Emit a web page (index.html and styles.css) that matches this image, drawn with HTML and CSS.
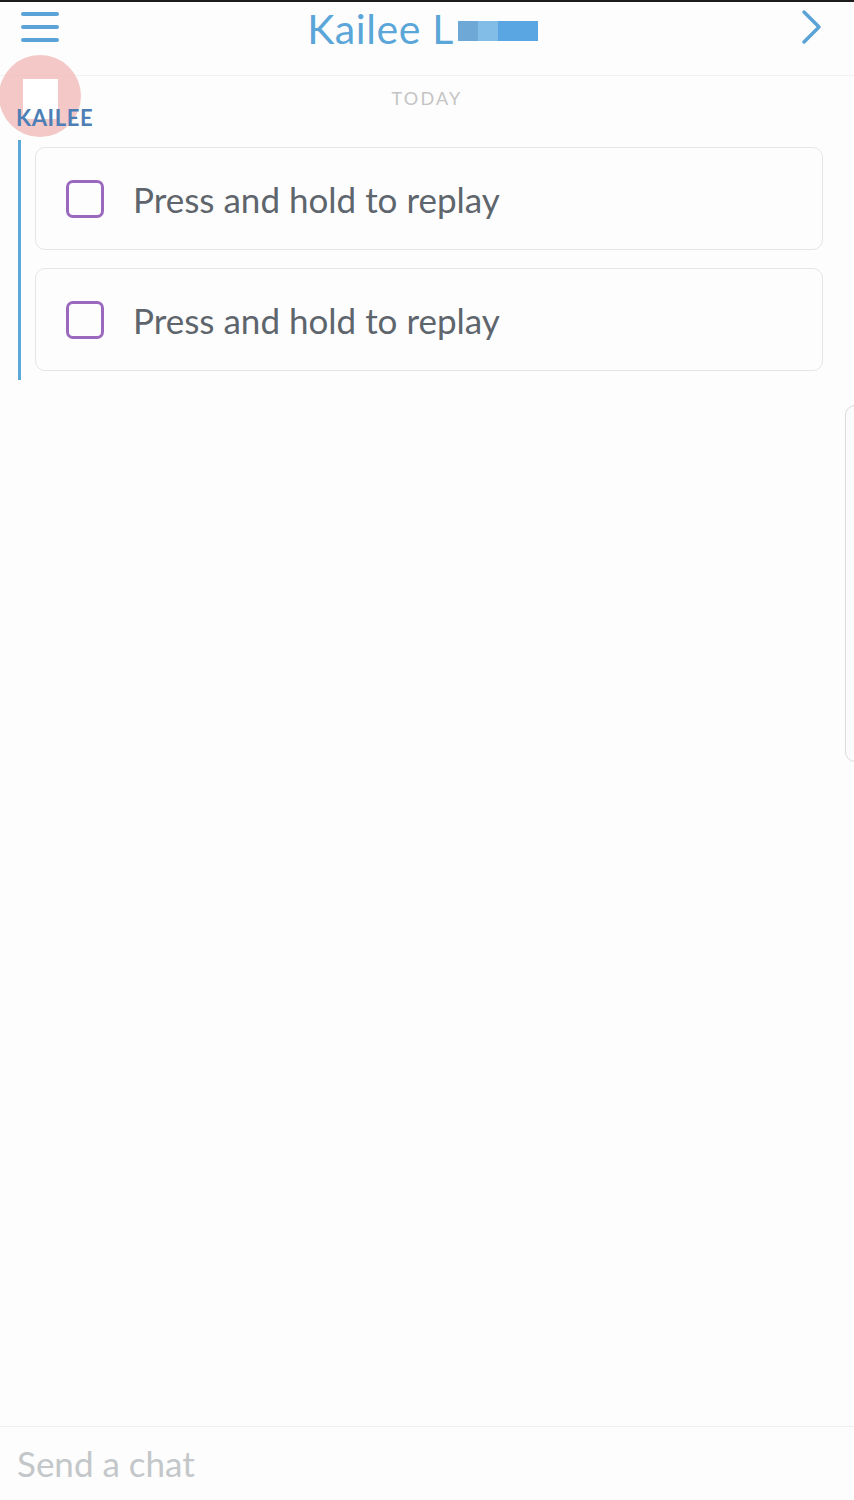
FILE: index.html
```html
<!DOCTYPE html>
<html lang="en">
<head>
  <meta charset="UTF-8">
  <title>Chat</title>
  <meta name="viewport" content="width=device-width, initial-scale=1">
  <link rel="stylesheet" href="styles.css">
</head>
<body>

<div class="pantalla">
  <header class="cabecera">
    <button class="icono menu" aria-label="Menu">
      <svg width="40" height="34" viewBox="0 0 40 34">
        <g stroke="#5ba3d6" stroke-width="4" stroke-linecap="round">
          <line x1="3" y1="4" x2="37" y2="4"/>
          <line x1="3" y1="17" x2="37" y2="17"/>
          <line x1="3" y1="30" x2="37" y2="30"/>
        </g>
      </svg>
    </button>

    <h1 class="titulo">Kailee L<span class="censura"><i class="c1"></i><i class="c2"></i><i class="c3"></i></span></h1>

    <button class="icono siguiente" aria-label="Next">
      <svg width="24" height="38" viewBox="0 0 24 38">
        <polyline points="4,4 19,19 4,34" fill="none" stroke="#5ba3d6" stroke-width="3.5" stroke-linecap="round" stroke-linejoin="round"/>
      </svg>
    </button>
  </header>

  <main class="conversacion">
    <div class="toque"><span></span></div>

    <p class="fecha">TODAY</p>
    <p class="remitente">KAILEE</p>

    <div class="mensajes">
      <div class="snap">
        <span class="casilla"></span>
        <span class="texto">Press and hold to replay</span>
      </div>
      <div class="snap">
        <span class="casilla"></span>
        <span class="texto">Press and hold to replay</span>
      </div>
    </div>

    <div class="pestana"></div>
  </main>

  <footer class="pie">
    <input type="text" placeholder="Send a chat">
  </footer>
</div>

</body>
</html>
```

FILE: styles.css
```css
* {
  box-sizing: border-box;
}

body {
  margin: 0;
  font-family: 'Lato', 'Open Sans', sans-serif;
  background: #fdfdfd;
}

.pantalla {
  display: flex;
  flex-direction: column;
  height: 1500px;
  border-top: 2px solid #1c1c1c;
}

.cabecera {
  display: grid;
  grid-template-columns: 1fr auto 1fr;
  align-items: start;
  height: 74px;
  padding: 6px 30px 0 20px;
  border-bottom: 1px solid #f1f1f1;
}

.icono {
  background: none;
  border: none;
  padding: 0;
  cursor: pointer;
}

.menu {
  justify-self: start;
  margin-top: 2px;
}

.siguiente {
  justify-self: end;
}

.titulo {
  margin: 0;
  margin-left: 1px;
  font-size: 41px;
  font-weight: 400;
  letter-spacing: 0.6px;
  color: #5ba6d8;
  line-height: 42px;
  display: flex;
  align-items: center;
}

.censura {
  display: flex;
  height: 20px;
  margin-left: 4px;
  margin-top: 4px;
}

.censura i {
  display: block;
  height: 100%;
}

.censura .c1 { width: 20px; background: #6ea8d6; }
.censura .c2 { width: 20px; background: #82bde8; }
.censura .c3 { width: 40px; background: #5aa6e2; }

.conversacion {
  flex: 1;
  position: relative;
  padding-top: 12px;
}

.toque {
  position: absolute;
  left: -1px;
  top: -21px;
  width: 82px;
  height: 82px;
  border-radius: 50%;
  background: rgba(242, 182, 182, 0.75);
}

.toque span {
  position: absolute;
  left: 24px;
  top: 24px;
  width: 35px;
  height: 40px;
  background: #fff;
}

.fecha {
  margin: 0;
  text-align: center;
  font-size: 18px;
  letter-spacing: 2.2px;
  color: #c4c4c4;
  line-height: 20px;
}

.remitente {
  position: relative;
  margin: 0;
  padding-left: 16px;
  font-size: 22px;
  font-weight: 700;
  letter-spacing: 0.6px;
  color: #4d7fb6;
  line-height: 24px;
  margin-top: -2px;
}

.mensajes {
  display: flex;
  flex-direction: column;
  gap: 18px;
  margin: 10px 31px 0 18px;
  padding: 7px 0 9px 14px;
  border-left: 3px solid #5aa9d9;
}

.snap {
  display: flex;
  align-items: center;
  gap: 29px;
  height: 103px;
  padding-left: 30px;
  background: #fdfdfd;
  border: 1px solid #e5e5e5;
  border-radius: 10px;
}

.casilla {
  width: 38px;
  height: 38px;
  border: 3px solid #9a69bd;
  border-radius: 7px;
}

.texto {
  font-size: 35px;
  color: #5e656c;
}

.pestana {
  position: absolute;
  right: -2px;
  top: 329px;
  width: 11px;
  height: 357px;
  border: 1px solid #dcdcdc;
  border-radius: 10px 0 0 10px;
  background: #fbfbfb;
}

.pie {
  border-top: 1px solid #efefef;
  height: 74px;
  padding: 15px 17px 0;
}

.pie input {
  width: 100%;
  border: none;
  outline: none;
  background: none;
  padding: 0;
  font-family: inherit;
  font-size: 35px;
  color: #5e656c;
}

.pie input::placeholder {
  color: #c3c7c9;
}
```
